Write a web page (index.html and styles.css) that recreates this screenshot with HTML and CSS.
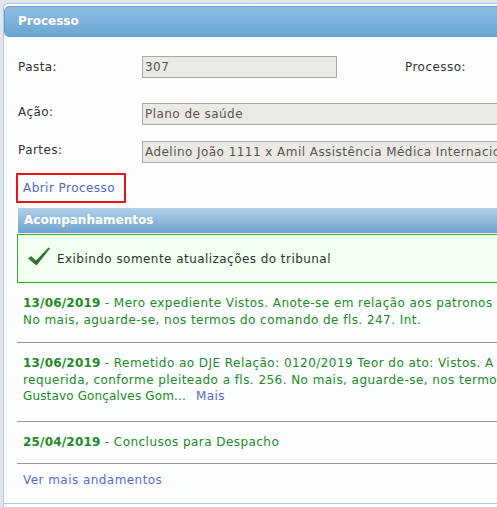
FILE: index.html
```html
<!DOCTYPE html>
<html lang="pt">
<head>
<meta charset="utf-8">
<title>Processo</title>
<link rel="stylesheet" href="styles.css">
</head>
<body>
<div class="panel">
  <div class="panel-header">Processo</div>
  <div class="panel-body">
    <div class="row row-first">
      <span class="label">Pasta:</span>
      <div class="field field-short">307</div>
      <span class="label label-right">Processo:</span>
    </div>
    <div class="row row-second">
      <span class="label">Ação:</span>
      <div class="field field-long">Plano de saúde</div>
    </div>
    <div class="row row-third">
      <span class="label">Partes:</span>
      <div class="field field-long">Adelino João 1111 x Amil Assistência Médica Internacional</div>
    </div>
    <a class="open-link" href="#">Abrir Processo</a>

    <div class="section">
      <div class="section-header">Acompanhamentos</div>
      <div class="notice">
        <svg class="check" width="22" height="19" viewBox="0 0 22 19" aria-hidden="true">
          <defs>
            <linearGradient id="g" x1="0" y1="0" x2="1" y2="1">
              <stop offset="0" stop-color="#4d8a3c"/>
              <stop offset="1" stop-color="#1f5a1f"/>
            </linearGradient>
          </defs>
          <path d="M0 11.5 L3 9 L8 13.5 L20.5 0.5 L22 1.5 L8.5 18.5 Z" fill="url(#g)"/>
        </svg>
        <span>Exibindo somente atualizações do tribunal</span>
      </div>
      <div class="entry entry-first">
        <span class="date">13/06/2019</span> - Mero expediente Vistos. Anote-se em relação aos patronos<br>No mais, aguarde-se, nos termos do comando de fls. 247. Int.
      </div>
      <div class="entry entry-long">
        <span class="date">13/06/2019</span> - Remetido ao DJE Relação: 0120/2019 Teor do ato: Vistos. A<br>requerida, conforme pleiteado a fls. 256. No mais, aguarde-se, nos termos<br><span class="trunc">Gustavo Gonçalves Gom...</span><a class="more" href="#">Mais</a>
      </div>
      <div class="entry">
        <span class="date">25/04/2019</span> - Conclusos para Despacho
      </div>
      <div class="see-more"><a href="#">Ver mais andamentos</a></div>
    </div>
  </div>
</div>
</body>
</html>
```
FILE: styles.css
```css
html, body {
  margin: 0;
  padding: 0;
}
body {
  background: #e2e6ea;
  overflow: hidden;
  font-family: "DejaVu Sans", Verdana, sans-serif;
  font-size: 12px;
  letter-spacing: 0.45px;
  color: #333;
}
a { text-decoration: none; }

.panel {
  margin: 3px 0 0 3px;
  width: 760px;
  height: 520px;
  background: #fbfdfe;
  border-top: 1px solid #a9c9e5;
  border-left: 1px solid #a9c9e5;
  border-top-left-radius: 5px;
  padding-top: 2px;
}
.panel-header {
  height: 29px;
  border: 1px solid #6a9fcf;
  border-radius: 5px;
  background: linear-gradient(#8fbde1, #6ba5d3);
  color: #fff;
  font-weight: bold;
  letter-spacing: 0;
  line-height: 29px;
  padding-left: 13px;
}
.panel-body {
  padding-left: 14px;
}
.row {
  display: flex;
  align-items: flex-start;
  white-space: nowrap;
}
.row-first { margin-top: 19px; }
.row-second { margin-top: 25px; }
.row-third { margin-top: 16px; }
.label {
  width: 124px;
  flex: none;
  line-height: 17px;
  color: #333;
}
.row-first .label { padding-top: 3px; }
.row-second .label, .row-third .label { padding-top: 1px; }
.label-right {
  margin-left: 68px;
  width: auto;
}
.field {
  height: 20px;
  line-height: 20px;
  background: #ebe9e3;
  border: 1px solid #aaa8a2;
  color: #555;
  padding-left: 2px;
  overflow: hidden;
  flex: none;
  box-sizing: content-box;
}
.field-short { width: 191px; }
.field-long { width: 600px; }

.open-link {
  display: inline-block;
  margin: 10px 0 0 -2px;
  border: 2px solid #e8141a;
  padding: 6px 9px 6px 5px;
  line-height: 14px;
  color: #5567c4;
}

.section {
  margin: 5px 0 0 -1px;
  width: 680px;
}
.section-header {
  margin-left: 1px;
  height: 25px;
  line-height: 24px;
  background: linear-gradient(#b2cfe8, #6ca4d0);
  color: #fff;
  font-weight: bold;
  letter-spacing: 0;
  padding-left: 6px;
}
.notice {
  margin-top: 1px;
  height: 47px;
  border: 1px solid #2faa2f;
  background: #f0fff0;
  display: flex;
  align-items: center;
  padding-left: 10px;
  color: #333;
}
.check {
  margin: 0 7px 4px 0;
  flex: none;
}
.entry {
  padding: 12px 6px 13px;
  line-height: 16.5px;
  color: #228b22;
  white-space: nowrap;
  border-bottom: 1px solid #9a9a9a;
}
.entry-first { padding-bottom: 14px; }
.entry-long { padding-bottom: 16px; }
.date { font-weight: bold; letter-spacing: 0.2px; }
.trunc { letter-spacing: 0.15px; }
.more {
  color: #5567c4;
  margin-left: 10px;
}
.see-more {
  padding: 8px 6px 14px;
  line-height: 17px;
}
.see-more a { color: #5a6ec8; }
.panel-body::after {
  content: "";
  display: block;
  border-top: 1px solid #a9c9e5;
  margin-left: -14px;
}
```
